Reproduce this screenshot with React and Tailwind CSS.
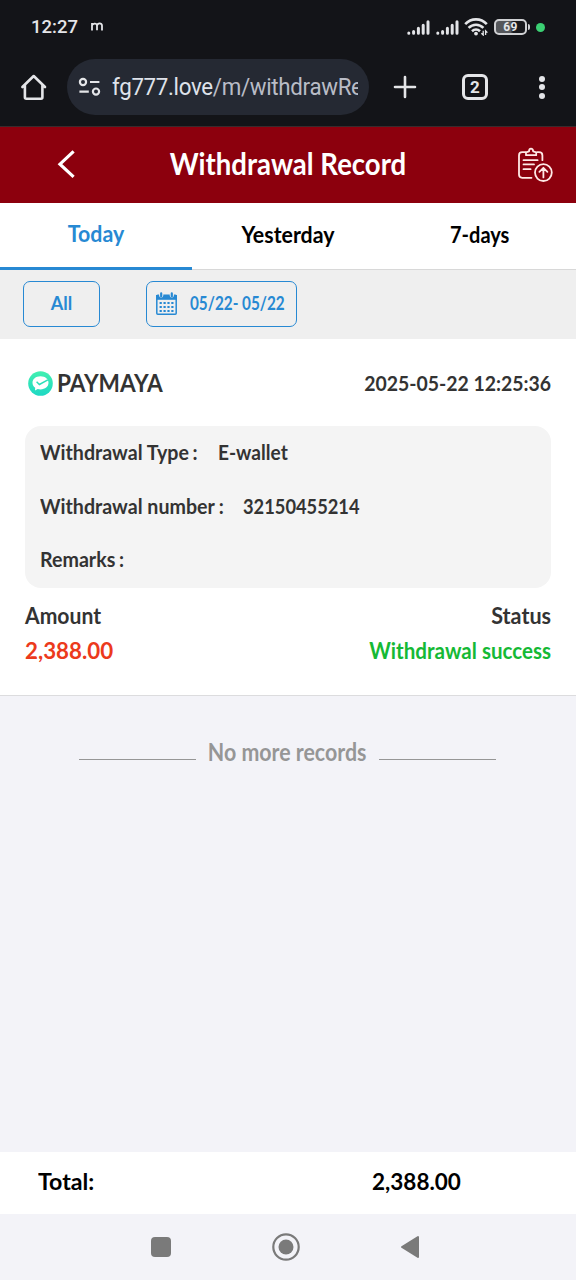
// Withdrawal record page, with the phone status bar and browser bar around it.

const TABS = [
  { label: "Today", active: true, style: "scale-x-[0.97]" },
  { label: "Yesterday", active: false, style: "scale-x-[0.97]" },
  { label: "7-days", active: false, style: "scale-x-[0.91]" },
];

const SignalIcon = () => (
  <svg className="w-[23px] h-[15px]" viewBox="0 0 23 15" stroke="#e4e5e8" strokeWidth="3" strokeLinecap="round">
    <path d="M1.8 13.3v-.2M6.6 13.3v-1.700M11.4 13.3V8.2M16.2 13.3V5.2M21 13.3V1.7" />
  </svg>
);

const WifiIcon = () => (
  <svg className="w-6 h-[18px]" viewBox="0 0 24 18" fill="none" stroke="#e4e5e8" strokeWidth="2.6">
    <path d="M1.2 6.2C7.2-.2 16.8-.2 22.8 6.2M4.6 9.9c4.2-4.300 10.600-4.300 14.800 0M8 13.300c2.400-2.300 5.600-2.300 8 0" />
    <circle cx="12" cy="15.600" r="1.900" fill="#e4e5e8" stroke="none" />
    <path strokeWidth="1.300" d="M19.200 12.800V17l-1.800-1.800M21.600 17v-4.200l1.800 1.800" />
  </svg>
);

const StatusBar = () => (
  <div className="h-[55px] flex items-center text-[#e4e5e8] font-['Roboto',sans-serif]">
    <span className="ml-[31px] w-[47px] text-[18.5px] leading-none font-medium whitespace-nowrap">12:27</span>
    <svg className="ml-[13px] -mt-0.5 w-[12px] h-[9px]" viewBox="0 0 12 9" fill="none" stroke="currentColor" strokeWidth="1.8">
      <path d="M1 8.6V1M1 3.6C1.4 1.6 5.8.6 6 3.4v4.8M6 3.6C6.6.8 11 .6 11 3.6v5" />
    </svg>
    <div className="ml-auto mr-[31px] -mt-px flex items-center">
      <SignalIcon />
      <span className="w-[5.5px]" />
      <SignalIcon />
      <span className="w-[5.5px]" />
      <WifiIcon />
      <div className="ml-[6px] w-[33px] h-[16px] rounded-[5px] border-2 border-[#cfd0d3] bg-linear-to-r from-[#55575b] from-50% to-[#17181c] to-60% flex items-center justify-center text-[12px] leading-none font-bold tracking-[0.3px]">
        69
      </div>
      <span className="ml-px w-[2px] h-[6px] rounded-r bg-[#cfd0d3]" />
      <span className="ml-[6px] w-[9px] h-[9px] rounded-full bg-[#3bd073]" />
    </div>
  </div>
);

const BrowserBar = () => (
  <div className="h-[72px] pb-[7px] flex items-center border-b border-[#3a2a2c] text-[#e4e5e8]">
    <svg className="ml-[20px] w-[27px] h-[28px]" viewBox="0 0 27 28" fill="none" stroke="currentColor" strokeWidth="2.6" strokeLinejoin="round" strokeLinecap="round">
      <path d="M2.4 14 13.7 3 25 14M4.9 12.3V24.3q0 1.4 1.4 1.4H21q1.4 0 1.4-1.4V12.3" />
    </svg>
    <div className="ml-[20px] w-[302px] h-[56px] rounded-full bg-[#252933] flex items-center">
      <svg className="ml-[11px] w-[23px] h-[20px] shrink-0" viewBox="0 0 23 20" fill="none" stroke="currentColor" strokeWidth="2.2">
        <circle cx="5" cy="5" r="3.1" />
        <circle cx="18" cy="14.6" r="3.1" />
        <path d="M12 5h9.4M1.4 14.6h9.4" />
      </svg>
      <div className="ml-[11px] w-[246px] overflow-hidden whitespace-nowrap text-[24px] leading-[30px] font-['Roboto',sans-serif] text-[#dfe2ea]">
        <span className="inline-block origin-left scale-x-[0.93] tracking-[-0.35px]">
          fg777.love<span className="text-[#b9bcc6]">/m/withdrawRe</span>
        </span>
      </div>
    </div>
    <svg className="ml-[24px] w-[24px] h-[24px]" viewBox="0 0 24 24" stroke="currentColor" strokeWidth="2.6" strokeLinecap="round">
      <path d="M2 12h20M12 2v20" />
    </svg>
    <div className="ml-[45px] w-[26px] h-[26px] rounded-[6px] border-[3px] border-[#e4e5e8] flex items-center justify-center font-['Roboto',sans-serif] text-[17px] leading-none font-bold">
      2
    </div>
    <div className="ml-[51px] flex flex-col gap-[2.5px]">
      <span className="w-[6px] h-[6px] rounded-full bg-[#e4e5e8]" />
      <span className="w-[6px] h-[6px] rounded-full bg-[#e4e5e8]" />
      <span className="w-[6px] h-[6px] rounded-full bg-[#e4e5e8]" />
    </div>
  </div>
);

const PageHeader = () => (
  <header className="h-[76px] bg-[#8c000d] flex items-center justify-between pl-[56px] pr-[23px] text-white">
    <svg className="w-[20px] h-[28px] -mt-0.5" viewBox="0 0 20 28" fill="none" stroke="currentColor" strokeWidth="3.2">
      <path d="M17.6 1.4 4 14.2 17.6 26.8" />
    </svg>
    <h1 className="w-[320px] -mt-1 mr-[17px] text-center text-[30px] leading-none font-bold whitespace-nowrap scale-x-[0.918]">
      Withdrawal Record
    </h1>
    <svg className="w-[36px] h-[36px]" viewBox="0 0 36 36" fill="none" stroke="#ffe9e6" strokeWidth="1.8" strokeLinecap="round" strokeLinejoin="round">
      <path d="M8.4 5.2H5.2Q2 5.2 2 8.4v19.2Q2 30.8 5.2 30.8H14.5M20.2 5.2H22Q25.4 5.2 25.4 8.4V13.2" />
      <path d="M9 8.2V5.4L12 4.4Q12 1.6 14 1.6T16.2 4.4L19.2 5.4V8.2Z" />
      <path d="M6.5 13.2H20.600M6.5 17.4H17M6.5 22.2H13.600" />
      <circle cx="26.4" cy="25.6" r="8.4" />
      <path d="M26.4 30.4V21.4M22.4 24.8l4-4 4 4" />
    </svg>
  </header>
);

const DateTabs = () => (
  <nav className="h-[67px] grid grid-cols-3 bg-white border-b border-[#d8d8d8] text-[22px] font-bold">
    {TABS.map((tab) => (
      <div
        key={tab.label}
        className={
          tab.active
            ? "h-[67px] pb-[3px] border-b-[3px] border-[#2789d3] text-[#2789d3] flex items-center justify-center"
            : "h-[67px] pb-[4px] text-black flex items-center justify-center"
        }
      >
        <span className={tab.style}>{tab.label}</span>
      </div>
    ))}
  </nav>
);

const CalendarIcon = () => (
  <svg className="w-[21px] h-[23px] shrink-0" viewBox="0 0 21 23" fill="none">
    <rect x=".8" y="3.2" width="19.4" height="19" rx="1" stroke="#2789d3" strokeWidth="1.5" />
    <path fill="#2789d3" d="M0 3h21v4.800H0z" />
    <path stroke="#efefef" strokeWidth="4.2" strokeLinecap="round" d="M5.2 2v1.600M15.8 2v1.600" />
    <path stroke="#2789d3" strokeWidth="2.2" strokeLinecap="round" d="M5.2 1.4v3M15.8 1.4v3" />
    <path stroke="#2789d3" strokeWidth="2.2" strokeDasharray="2.2 1.7" d="M3.6 11h14.200M3.6 15h14.200M3.6 19h14.200" />
  </svg>
);

const FilterRow = () => (
  <div className="h-[69px] pb-[2px] bg-[#efefef] flex items-center pl-[23px] text-[#2789d3] text-[18px] font-bold">
    <button className="w-[77px] h-[46px] rounded-[7px] border border-[#2789d3]">All</button>
    <button className="ml-[46px] w-[151px] h-[46px] rounded-[7px] border border-[#2789d3] flex items-center pl-[9px]">
      <CalendarIcon />
      <span className="ml-[13px] -mt-px whitespace-nowrap origin-left scale-x-[0.85]">05/22- 05/22</span>
    </button>
  </div>
);

const DetailRow = ({ label, value, labelWidth, valueScale }) => (
  <div className="h-[53.5px] pb-[2px] flex items-center">
    <span className={`${labelWidth} whitespace-nowrap`}>
      <span className="inline-block origin-left scale-x-[0.935]">
        {label}
        <span className="ml-[4px]">:</span>
      </span>
    </span>
    <span className={`inline-block origin-left ${valueScale}`}>{value}</span>
  </div>
);

const RecordCard = () => (
  <section className="h-[357px] px-[25px] bg-white border-b border-[#dcdcde] text-[#333] font-bold">
    <div className="h-[87px] flex items-center">
      <svg className="ml-[3px] mt-[2px] w-[25px] h-[25px]" viewBox="0 0 25 25" fill="none">
        <defs>
          <linearGradient id="badge" x1="0" y1="0" x2="0" y2="1">
            <stop stopColor="#42f0b0" />
            <stop offset="1" stopColor="#1ed8c4" />
          </linearGradient>
        </defs>
        <circle cx="12.5" cy="12.5" r="12.3" fill="url(#badge)" />
        <path fill="#fff" d="M12.5 5.200c4.800 0 8 2.800 8 6.600s-3.400 6.600-8 6.600c-1 0-2-.1-2.800-.4L7 19.400l.2-2.600C5.400 15.600 4.500 13.900 4.500 11.800c0-3.800 3.200-6.600 8-6.600z" />
        <path stroke="#2edfb9" strokeWidth="1.5" d="M8.600 10.800l2.800 2.700 8.400-4.600" />
      </svg>
      <span className="ml-[4px] text-[25px] origin-left scale-x-[0.905]">PAYMAYA</span>
      <span className="ml-auto mt-px text-[21px] whitespace-nowrap origin-right scale-x-[0.925]">2025-05-22 12:25:36</span>
    </div>
    <div className="h-[162px] rounded-[16px] bg-[#f4f4f4] px-[15px] text-[21px]">
      <DetailRow label="Withdrawal Type" value="E-wallet" labelWidth="w-[177.5px]" valueScale="scale-x-[0.91]" />
      <DetailRow label="Withdrawal number" value="32150455214" labelWidth="w-[203px]" valueScale="scale-x-[0.87]" />
      <DetailRow label="Remarks" value="" labelWidth="w-[100px]" valueScale="scale-x-100" />
    </div>
    <div className="pt-[13px] flex justify-between text-[22px] leading-[30px]">
      <span className="origin-left scale-x-[0.96]">Amount</span>
      <span className="origin-right scale-x-[0.98]">Status</span>
    </div>
    <div className="pt-[3px] flex justify-between text-[23px] leading-[32px]">
      <span className="text-[#ec3a1c] origin-left scale-x-[0.97]">2,388.00</span>
      <span className="text-[#15b935] origin-right scale-x-[0.895]">Withdrawal success</span>
    </div>
  </section>
);

const App = () => (
  <div className="w-[576px] h-[1280px] flex flex-col overflow-hidden bg-[#f3f3f8] font-['Lato',sans-serif]">
    <div className="h-[127px] bg-[#131418]">
      <StatusBar />
      <BrowserBar />
    </div>
    <PageHeader />
    <DateTabs />
    <FilterRow />
    <RecordCard />

    <div className="mt-[41px] mr-px flex items-center justify-center text-[#969696]">
      <span className="mt-[14px] w-[117px] h-px bg-[#969696]" />
      <span className="w-[183px] text-center text-[24px] leading-[30px] font-bold whitespace-nowrap">
        <span className="inline-block -mx-4 scale-x-[0.89]">No more records</span>
      </span>
      <span className="mt-[14px] w-[117px] h-px bg-[#969696]" />
    </div>

    <div className="mt-auto h-[62px] bg-white flex items-center pl-[38px] pb-[2px] text-[22.5px] font-bold text-black">
      <span className="w-[334px]">
        <span className="inline-block origin-left scale-x-[1.03]">Total:</span>
      </span>
      <span className="origin-left">2,388.00</span>
    </div>

    <div className="h-[66px] flex items-center text-[#7a7a7a]">
      <span className="ml-[151px] w-[20px] h-[20px] rounded-[4px] bg-[#7a7a7a]" />
      <svg className="ml-[101px] w-[28px] h-[28px]" viewBox="0 0 28 28" fill="none">
        <circle cx="14" cy="14" r="12.7" stroke="currentColor" strokeWidth="2.2" />
        <circle cx="14" cy="14" r="7.5" fill="currentColor" />
      </svg>
      <svg className="ml-[100px] w-[20px] h-[24px]" viewBox="0 0 20 24" fill="currentColor" stroke="currentColor" strokeWidth="2" strokeLinejoin="round">
        <path d="M2 12 18 2v20z" />
      </svg>
    </div>
  </div>
);

export default App;
